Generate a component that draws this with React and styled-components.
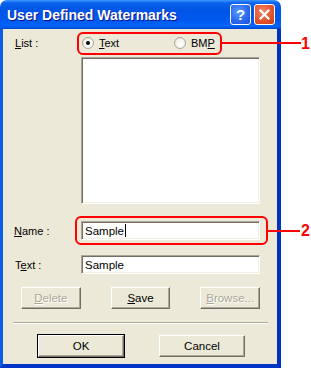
import React from "react";
import styled, { createGlobalStyle } from "styled-components";

const GlobalStyle = createGlobalStyle`
  body {
    margin: 0;
    background: #fff;
  }
  * {
    box-sizing: border-box;
  }
`;

const Page = styled.div`
  position: relative;
  width: 311px;
  height: 368px;
  background: #fff;
  font-family: "Liberation Sans", Arial, sans-serif;
  font-size: 11px;
  color: #000;
`;

const Window = styled.div`
  width: 281px;
  height: 368px;
  display: flex;
  flex-direction: column;
`;

const TitleBar = styled.div`
  height: 29px;
  display: flex;
  align-items: center;
  padding: 0 6px 0 7px;
  border-radius: 7px 7px 0 0;
  background: linear-gradient(
    to bottom,
    #3d95ff 0px,
    #0a62ec 3px,
    #0055e5 10px,
    #0058ee 20px,
    #0064f8 26px,
    #0046d0 29px
  );
`;

const Title = styled.div`
  flex: 1;
  color: #fff;
  font-weight: bold;
  font-size: 14px;
  padding-top: 1px;
  text-shadow: 1px 1px #0f1089;
  white-space: nowrap;
`;

const TitleButtons = styled.div`
  display: flex;
  gap: 3px;
`;

const TitleButton = styled.div`
  width: 21px;
  height: 21px;
  border: 1px solid #fff;
  border-radius: 3px;
  display: flex;
  align-items: center;
  justify-content: center;
  color: #fff;
  font-weight: bold;
  font-size: 15px;
  background: ${(p) =>
    p.$close
      ? "radial-gradient(circle at 40% 35%, #f08a6a 0%, #e3542d 55%, #c73c17 100%)"
      : "radial-gradient(circle at 40% 35%, #5c9bff 0%, #2b6bf0 55%, #1a4fd8 100%)"};
`;

const Frame = styled.div`
  flex: 1;
  background: #ece9d8;
  border-left: 3px solid #0a5ee8;
  border-right: 4px solid #0033c4;
  border-bottom: 4px solid #0036c8;
  padding: 3px 17px 7px 11px;
  display: flex;
  flex-direction: column;
`;

const FormGrid = styled.div`
  display: grid;
  grid-template-columns: 67px 179px;
  align-items: center;
`;

const Label = styled.div`
  padding-left: ${(p) => p.$indent || 0}px;
  margin-top: ${(p) => p.$top || 0}px;
`;

const U = styled.span`
  text-decoration: underline;
  text-underline-offset: 1px;
`;

const RadioRow = styled.div`
  height: 22px;
  display: flex;
  align-items: center;
  padding-left: 1px;
`;

const RadioItem = styled.div`
  display: flex;
  align-items: center;
  gap: 5px;
  width: ${(p) => p.$w || "auto"};
`;

const RadioCircle = styled.div`
  width: 12px;
  height: 12px;
  border-radius: 50%;
  border: 1px solid #a8a799;
  background: radial-gradient(circle at 60% 60%, #fff 0%, #f2f1ea 60%, #d6d4c6 100%);
  display: flex;
  align-items: center;
  justify-content: center;
  &::after {
    content: "";
    width: 4px;
    height: 4px;
    border-radius: 50%;
    background: ${(p) => (p.$checked ? "#000" : "transparent")};
  }
`;

const Sunken = styled.div`
  grid-column: 2;
  height: ${(p) => p.$h}px;
  margin-top: ${(p) => p.$top || 0}px;
  background: #fff;
  border-top: 1px solid #aca899;
  border-left: 1px solid #aca899;
  border-bottom: 1px solid #fff;
  border-right: 1px solid #fff;
  box-shadow: inset 1px 1px #716f64, inset -1px -1px #f1efe2;
  display: flex;
  align-items: center;
  padding-left: 3px;
  font-size: 11.5px;
`;

const Caret = styled.span`
  display: inline-block;
  width: 1px;
  height: 13px;
  background: #000;
  margin-left: 1px;
`;

const ButtonRow = styled.div`
  display: flex;
  gap: ${(p) => p.$gap}px;
  padding-left: ${(p) => p.$indent}px;
  margin-top: ${(p) => p.$top}px;
`;

const Button = styled.div`
  width: ${(p) => p.$w}px;
  height: 22px;
  display: flex;
  align-items: center;
  justify-content: center;
  background: #ece9d8;
  border-top: 1px solid #fff;
  border-left: 1px solid #fff;
  border-right: 1px solid #716f64;
  border-bottom: 1px solid #716f64;
  box-shadow: inset -1px -1px #aca899;
  color: ${(p) => (p.$disabled ? "#aca899" : "#000")};
  text-shadow: ${(p) => (p.$disabled ? "1px 1px #fff" : "none")};
  outline: ${(p) => (p.$default ? "1px solid #000" : "none")};
  outline-offset: 0;
  font-size: 11.5px;
`;

const Separator = styled.div`
  width: 255px;
  margin-left: -1px;
  margin-top: 13px;
  height: 2px;
  border-top: 1px solid #aca899;
  border-bottom: 1px solid #fff;
`;

const Callout = styled.div`
  position: absolute;
  left: ${(p) => p.$x}px;
  top: ${(p) => p.$y}px;
  width: ${(p) => p.$w}px;
  height: ${(p) => p.$h}px;
  border: 2px solid #ff0000;
  border-radius: 6px;
`;

const Leader = styled.div`
  position: absolute;
  left: ${(p) => p.$x}px;
  top: ${(p) => p.$y}px;
  width: ${(p) => p.$w}px;
  height: 2px;
  background: #ff0000;
`;

const Number = styled.div`
  position: absolute;
  left: ${(p) => p.$x}px;
  top: ${(p) => p.$y}px;
  color: #ff0000;
  font-weight: bold;
  font-size: 16px;
  line-height: 16px;
`;

export default function App() {
  return (
    <Page>
      <GlobalStyle />
      <Window>
        <TitleBar>
          <Title>User Defined Watermarks</Title>
          <TitleButtons>
            <TitleButton>?</TitleButton>
            <TitleButton $close>
              <svg width="11" height="11" viewBox="0 0 11 11">
                <path d="M1.5 1.5 L9.5 9.5 M9.5 1.5 L1.5 9.5" stroke="#fff" strokeWidth="2.2" strokeLinecap="square" />
              </svg>
            </TitleButton>
          </TitleButtons>
        </TitleBar>
        <Frame>
          <FormGrid>
            <Label $indent={1}>
              <U>L</U>ist :
            </Label>
            <RadioRow>
              <RadioItem $w="92px">
                <RadioCircle $checked />
                <span>
                  <U>T</U>ext
                </span>
              </RadioItem>
              <RadioItem>
                <RadioCircle />
                <span>
                  BM<U>P</U>
                </span>
              </RadioItem>
            </RadioRow>
            <Sunken $h={147} $top={3} />
            <Label $top={17}>
              <U>N</U>ame :
            </Label>
            <Sunken $h={19} $top={17}>
              Sample
              <Caret />
            </Sunken>
            <Label $top={15} $indent={1}>
              T<U>e</U>xt :
            </Label>
            <Sunken $h={19} $top={15}>
              Sample
            </Sunken>
          </FormGrid>
          <ButtonRow $gap={30} $indent={7} $top={13}>
            <Button $w={60} $disabled>
              <span>
                <U>D</U>elete
              </span>
            </Button>
            <Button $w={60}>
              <span>
                <U>S</U>ave
              </span>
            </Button>
            <Button $w={60} $disabled>
              <span>
                <U>B</U>rowse...
              </span>
            </Button>
          </ButtonRow>
          <Separator />
          <ButtonRow $gap={35} $indent={24} $top={11}>
            <Button $w={86} $default>
              OK
            </Button>
            <Button $w={86}>Cancel</Button>
          </ButtonRow>
        </Frame>
      </Window>

      <Callout $x={77} $y={32} $w={145} $h={23} />
      <Leader $x={221} $y={42} $w={80} />
      <Number $x={301} $y={36}>1</Number>

      <Callout $x={75} $y={216} $w={193} $h={29} />
      <Leader $x={267} $y={230} $w={33} />
      <Number $x={301} $y={223}>2</Number>
    </Page>
  );
}
